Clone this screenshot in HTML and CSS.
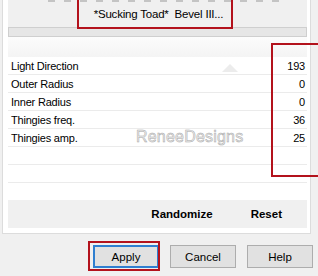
FILE: index.html
```html
<!DOCTYPE html>
<html>
<head>
<meta charset="utf-8">
<link rel="stylesheet" href="styles.css">
</head>
<body>
<div class="frame">
  <div class="panel">
    <div class="top">
      <div class="dashes"></div>
      <div class="title">*Sucking Toad*&nbsp; Bevel III...</div>
      <div class="bar"></div>
    </div>
    <div class="head"></div>
    <div class="rows">
      <div class="row"><span>Light Direction</span><span>193</span></div>
      <div class="row"><span>Outer Radius</span><span>0</span></div>
      <div class="row"><span>Inner Radius</span><span>0</span></div>
      <div class="row"><span>Thingies freq.</span><span>36</span></div>
      <div class="row"><span>Thingies amp.</span><span>25</span></div>
      <div class="row"></div>
      <div class="row"></div>
    </div>
    <div class="spacer"></div>
    <div class="actions">
      <span class="act act-rand">Randomize</span>
      <span class="act">Reset</span>
    </div>
  </div>
  <div class="buttons">
    <button class="btn btn-default">Apply</button>
    <button class="btn">Cancel</button>
    <button class="btn">Help</button>
  </div>

  <svg class="tri" width="16" height="8" viewBox="0 0 16 8"><polygon points="8,0 16,8 0,8" fill="#ececec"/></svg>
  <div class="watermark">ReneeDesigns</div>

  <div class="mark mark-title"></div>
  <div class="mark mark-values"></div>
  <div class="mark mark-apply"></div>
</div>
</body>
</html>
```
FILE: styles.css
```css
* { box-sizing: border-box; }
html, body { margin: 0; padding: 0; }
body {
  background: #f0f0f0;
  font-family: "Liberation Sans", Arial, sans-serif;
  font-size: 11px;
  color: #000;
}
.frame {
  position: relative;
  width: 318px;
  height: 276px;
  overflow: hidden;
}
.panel {
  margin-left: 2px;
  width: 309px;
  height: 234px;
  background: #fff;
  border-left: 1px solid #dcdcdc;
  border-right: 1px solid #dcdcdc;
  border-bottom: 1px solid #dcdcdc;
  padding: 0 3px 5px 5px;
  display: flex;
  flex-direction: column;
}
.top {
  height: 37px;
  background: #f0f0f0;
  display: flex;
  flex-direction: column;
}
.dashes {
  height: 2px;
  margin: 0 24px 0 40px;
  background: repeating-linear-gradient(90deg, #c4c4c4 0 7px, transparent 7px 16px);
}
.title {
  height: 25px;
  text-align: center;
  line-height: 24px;
  font-size: 11.5px;
  letter-spacing: -0.2px;
  padding-left: 2px;
}
.bar {
  height: 10px;
  background: #e6e6e6;
  border: 1px solid #cfcfcf;
}
.head {
  height: 20px;
  background: linear-gradient(#fcfcfc, #f4f4f4);
}
.rows { display: flex; flex-direction: column; }
.row {
  height: 18px;
  border-bottom: 1px solid #ebebeb;
  display: flex;
  justify-content: space-between;
  align-items: center;
  padding: 0 2px 0 3px;
  letter-spacing: -0.2px;
}
.spacer { height: 17px; }
.actions {
  height: 28px;
  background: #f0f0f0;
  display: flex;
  justify-content: flex-end;
  align-items: center;
  gap: 38px;
  padding-right: 25px;
  font-weight: bold;
  font-size: 11.5px;
}
.buttons {
  display: flex;
  justify-content: flex-end;
  gap: 11px;
  padding: 11px 5px 0 0;
}
.btn {
  width: 66px;
  height: 23px;
  background: #e1e1e1;
  border: 1px solid #adadad;
  font-family: "Liberation Sans", Arial, sans-serif;
  font-size: 11.5px;
  color: #000;
  padding: 0;
  margin: 0;
}
.btn-default { border: 2px solid #2f7fd0; }
.tri { position: absolute; left: 222px; top: 64px; }
.watermark {
  position: absolute;
  left: 136px;
  top: 128px;
  font-size: 16px;
  color: #ececec;
  -webkit-text-stroke: 0.5px #a8a8a8;
  letter-spacing: 0.2px;
}
.mark {
  position: absolute;
  border: 2px solid #b3121c;
}
.mark-title { left: 77px; top: -4px; width: 156px; height: 33px; }
.mark-values { left: 271px; top: 43px; width: 60px; height: 134px; }
.mark-apply { left: 88px; top: 241px; width: 72px; height: 30px; }
```
